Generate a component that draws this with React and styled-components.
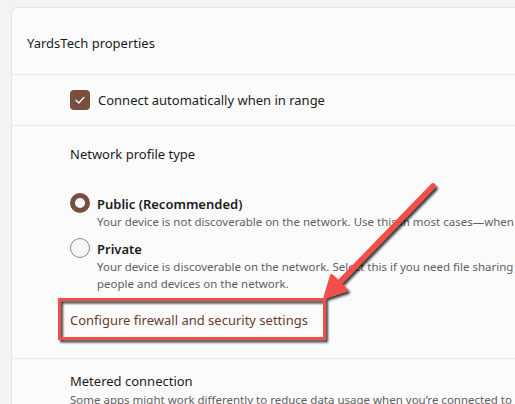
import React from "react";
import styled, { createGlobalStyle } from "styled-components";

const GlobalStyle = createGlobalStyle`
	html, body {
		margin: 0;
		padding: 0;
		background: #f3f3f3;
		overflow: hidden;
	}
	body {
		font-family: "Noto Sans", "Open Sans", sans-serif;
		color: #1b1b1b;
	}
`;

export default function App() {
	return (
		<>
			<GlobalStyle />
			<Page>
				<Panel>
					<HeaderSection>
						<Title>YardsTech properties</Title>
					</HeaderSection>

					<CheckSection>
						<CheckRow>
							<CheckBox>
								<svg width="12" height="12" viewBox="0 0 12 12">
									<path
										d="M2 6.3 L4.8 9 L10 3.4"
										fill="none"
										stroke="#ffffff"
										strokeWidth="1.3"
										strokeLinecap="round"
										strokeLinejoin="round"
									/>
								</svg>
							</CheckBox>
							<Label>Connect automatically when in range</Label>
						</CheckRow>
					</CheckSection>

					<ProfileSection>
						<Label>Network profile type</Label>
						<RadioGroup>
							<RadioRow>
								<Radio $checked />
								<RadioText>
									<RadioTitle>Public (Recommended)</RadioTitle>
									<Description>
										Your device is not discoverable on the network. Use this in most cases—when
									</Description>
								</RadioText>
							</RadioRow>
							<RadioRow>
								<Radio />
								<RadioText>
									<RadioTitle>Private</RadioTitle>
									<Description>
										Your device is discoverable on the network. Select this if you need file sharing
										<br />
										people and devices on the network.
									</Description>
								</RadioText>
							</RadioRow>
						</RadioGroup>
						<FirewallLink href="#">Configure firewall and security settings</FirewallLink>
					</ProfileSection>

					<MeteredSection>
						<Label>Metered connection</Label>
						<Description>
							Some apps might work differently to reduce data usage when you’re connected to
						</Description>
					</MeteredSection>
				</Panel>

				<Annotation width="515" height="404" viewBox="0 0 515 404">
					<defs>
						<filter id="shade" x="-20%" y="-20%" width="140%" height="140%">
							<feDropShadow dx="2" dy="2.5" stdDeviation="1.2" floodColor="#000" floodOpacity="0.75" />
						</filter>
					</defs>
					<g filter="url(#shade)">
						<rect x="59.5" y="299.5" width="265" height="39" fill="none" stroke="#f2504b" strokeWidth="3" />
						<line x1="433" y1="186" x2="336" y2="286" stroke="#f2504b" strokeWidth="5.5" strokeLinecap="round" />
						<polygon
							points="325,297 331.5,275.5 346.5,290"
							fill="#f2504b"
							stroke="#f2504b"
							strokeWidth="3"
							strokeLinejoin="round"
						/>
					</g>
				</Annotation>
			</Page>
		</>
	);
}

// Styled Components

const Page = styled.div`
	position: relative;
	display: flex;
	width: 515px;
	height: 404px;
	padding: 7px 0 0 11px;
	box-sizing: border-box;
`;

const Panel = styled.div`
	flex: 1;
	min-width: 0;
	display: flex;
	flex-direction: column;
	overflow: hidden;
	background: #fbfbfb;
	border: 1px solid #e5e5e5;
	border-right: none;
	border-bottom: none;
	border-top-left-radius: 6px;
`;

const Section = styled.div`
	flex: none;
	display: flex;
	flex-direction: column;
	border-bottom: 1px solid #e8e8e8;
	padding-left: 58px;
`;

const HeaderSection = styled(Section)`
	height: 67px;
	padding-left: 15px;
	justify-content: center;
	padding-top: 4px;
	box-sizing: border-box;
`;

const Title = styled.div`
	font-size: 13px;
	line-height: 20px;
`;

const CheckSection = styled(Section)`
	height: 51px;
	box-sizing: border-box;
	justify-content: center;
`;

const CheckRow = styled.div`
	display: flex;
	align-items: center;
	gap: 8px;
`;

const CheckBox = styled.div`
	width: 20px;
	height: 20px;
	border-radius: 4px;
	background: #7a4e3e;
	display: flex;
	align-items: center;
	justify-content: center;
`;

const Label = styled.div`
	font-size: 13px;
	line-height: 20px;
	color: #1b1b1b;
	white-space: nowrap;
`;

const ProfileSection = styled(Section)`
	padding-top: 18px;
	padding-bottom: 28px;
`;

const RadioGroup = styled.div`
	display: flex;
	flex-direction: column;
	gap: 10px;
	margin-top: 31px;
`;

const RadioRow = styled.div`
	display: flex;
	align-items: flex-start;
	gap: 7px;
`;

const Radio = styled.div`
	flex: none;
	width: 20px;
	height: 20px;
	margin-top: -2px;
	border-radius: 50%;
	box-sizing: border-box;
	background: ${(props) => (props.$checked ? "#ffffff" : "#f6f6f6")};
	border: ${(props) => (props.$checked ? "5.5px solid #7a4e3e" : "1px solid #8b8b8b")};
`;

const RadioText = styled.div`
	display: flex;
	flex-direction: column;
	white-space: nowrap;
`;

const RadioTitle = styled.div`
	font-size: 13px;
	line-height: 18px;
	font-weight: 600;
	color: #1b1b1b;
`;

const Description = styled.div`
	font-size: 11.5px;
	line-height: 17px;
	color: #5f5f5f;
	white-space: nowrap;
`;

const FirewallLink = styled.a`
	margin-top: 18px;
	font-size: 13px;
	line-height: 20px;
	color: #6b3b2f;
	text-decoration: none;
	white-space: nowrap;
`;

const MeteredSection = styled(Section)`
	border-bottom: none;
	padding-top: 12px;
`;

const Annotation = styled.svg`
	position: absolute;
	left: 0;
	top: 0;
	pointer-events: none;
`;
